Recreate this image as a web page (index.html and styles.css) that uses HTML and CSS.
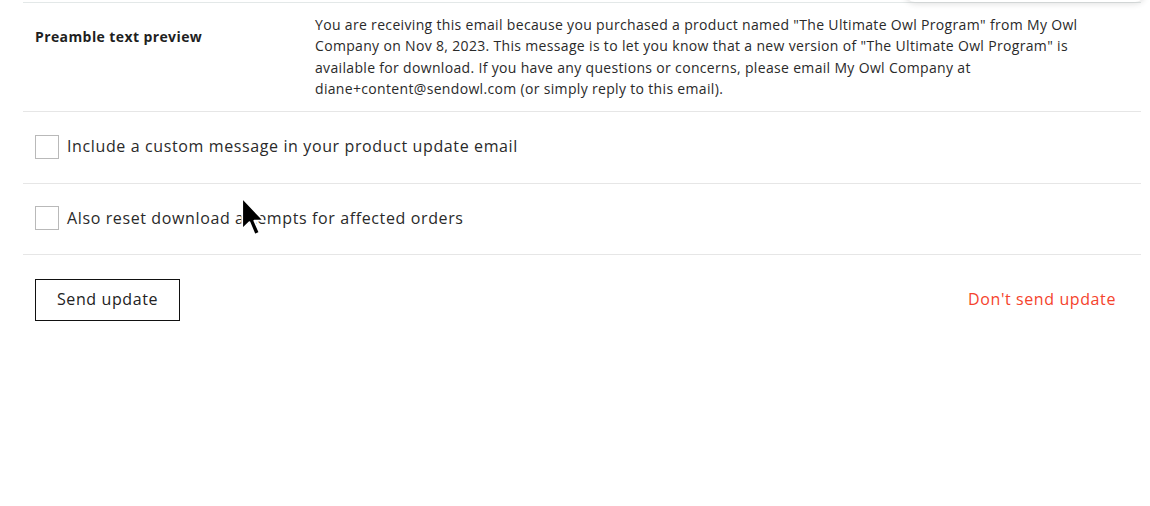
FILE: index.html
```html
<!DOCTYPE html>
<html>
<head>
<meta charset="utf-8">
<link rel="stylesheet" href="styles.css">
</head>
<body>
<div class="popover-shadow"></div>
<div class="panel">
  <div class="row preview-row">
    <div class="label">Preamble text preview</div>
    <div class="preview-text">You are receiving this email because you purchased a product named "The Ultimate Owl Program" from My Owl Company on Nov 8, 2023. This message is to let you know that a new version of "The Ultimate Owl Program" is available for download. If you have any questions or concerns, please email My Owl Company at diane+content@sendowl.com (or simply reply to this email).</div>
  </div>
  <label class="row check-row">
    <span class="checkbox"></span>
    <span class="check-text">Include a custom message in your product update email</span>
  </label>
  <label class="row check-row">
    <span class="checkbox"></span>
    <span class="check-text">Also reset download attempts for affected orders</span>
  </label>
  <div class="actions">
    <button class="send-btn">Send update</button>
    <a class="cancel-link" href="#">Don't send update</a>
  </div>
</div>
<svg class="cursor" width="26" height="42" viewBox="0 0 20 33">
  <path d="M1.5 1.5 L1.5 26 L7.2 20.6 L11.4 30.5 L15.2 28.8 L11 19.4 L18.5 19.4 Z" fill="#000" stroke="#fff" stroke-width="1.4" stroke-linejoin="round"/>
</svg>
</body>
</html>
```
FILE: styles.css
```css
html, body {
  margin: 0;
  padding: 0;
  background: #fff;
}
body {
  font-family: "Open Sans", "Noto Sans", sans-serif;
  color: #222;
  position: relative;
  width: 1150px;
  height: 506px;
  overflow: hidden;
}
.popover-shadow {
  position: absolute;
  top: -40px;
  left: 905px;
  width: 240px;
  height: 42px;
  background: #fff;
  border-radius: 0 0 10px 10px;
  box-shadow: 0 2px 6px rgba(0,0,0,0.12);
}
.panel {
  margin: 2px 9px 0 23px;
  border-top: 1px solid #e3e8e8;
}
.row {
  border-bottom: 1px solid #e6e6e6;
}
.preview-row {
  display: grid;
  grid-template-columns: 280px 1fr;
  padding: 12px 12px 12px 12px;
  height: 84px;
}
.label {
  font-weight: 700;
  font-size: 14px;
  letter-spacing: 0.4px;
  padding-top: 12px;
  color: #1f1f1f;
}
.preview-text {
  font-size: 14px;
  letter-spacing: 0.33px;
  line-height: 21.4px;
  color: #2a2a2a;
  margin-top: -1px;
}
.check-row {
  display: flex;
  align-items: center;
  gap: 8px;
  padding: 0 12px;
  height: 70.5px;
  cursor: default;
}
.checkbox {
  width: 22px;
  height: 22px;
  border: 1px solid #b9b9b9;
  background: #fff;
  flex: none;
  margin-top: -1px;
}
.check-text {
  font-size: 16px;
  letter-spacing: 0.62px;
  color: #2a2a2a;
  margin-top: -2px;
}
.actions {
  display: flex;
  justify-content: space-between;
  align-items: center;
  padding: 24px 25px 0 12px;
}
.send-btn {
  font-family: inherit;
  font-size: 16px;
  letter-spacing: 0.6px;
  color: #222;
  background: #fff;
  border: 1px solid #111;
  border-radius: 0;
  width: 145px;
  height: 42px;
  padding: 0 0 2px 0;
}
.cancel-link {
  font-size: 16px;
  letter-spacing: 0.6px;
  color: #f5432c;
  text-decoration: none;
  margin-top: -2px;
}
.cursor {
  position: absolute;
  left: 240px;
  top: 196px;
}
```
